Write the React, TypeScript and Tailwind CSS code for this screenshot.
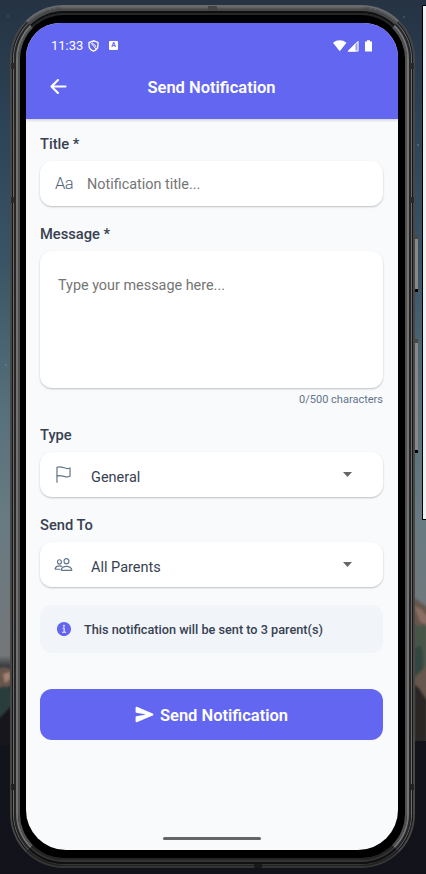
import React from "react";
import {
  IoArrowBack,
  IoFlagOutline,
  IoInformationCircle,
  IoPeopleOutline,
  IoSend,
} from "react-icons/io5";

const card = "rounded-[12px] bg-white shadow-[0_1px_2px_rgba(0,0,0,0.24)]";
const label = "h-[20px] text-[14.7px] font-medium leading-[20px] text-[#374151]";

function Wallpaper() {
  return (
    <svg className="absolute inset-0" width="426" height="874" viewBox="0 0 426 874">
      <defs>
        <linearGradient id="sky" x1="0" y1="0" x2="0" y2="1">
          <stop offset="0" stopColor="#253343" />
          <stop offset="0.14" stopColor="#2d4356" />
          <stop offset="0.3" stopColor="#3a5465" />
          <stop offset="0.47" stopColor="#57707b" />
          <stop offset="0.6" stopColor="#697b82" />
          <stop offset="0.75" stopColor="#74777a" />
          <stop offset="0.77" stopColor="#14151c" />
          <stop offset="1" stopColor="#11121a" />
        </linearGradient>
        <filter id="soft" x="-20%" y="-5%" width="140%" height="110%">
          <feGaussianBlur stdDeviation="1" />
        </filter>
      </defs>
      <rect width="426" height="874" fill="url(#sky)" />
      <g filter="url(#soft)">
        <path d="M398 590 L416 599 L430 609 V745 H398Z" fill="#66564e" />
        <path d="M414 606 l7 3 7 8 v10 l-8 -6z" fill="#8b6e63" />
        <path d="M414 624 l6 3 6 -4 v42 l-6 8 -6 -7z" fill="#46544a" />
        <path d="M414 650 l6 -5 3 8 v16 l-9 9z" fill="#33473f" />
        <path d="M414 684 l5 4 8 12 v50 h-13z" fill="#2b2628" />
        <path d="M-3 668 l8 -1 8 2 v15 l-8 6 -8 4z" fill="#66564e" />
        <path d="M3 674 l7 -2 v7 l-5 4z" fill="#a3816f" />
        <path d="M-3 688 l8 -2 8 4 v24 l-8 10 -8 8z" fill="#2b3e3c" />
        <path d="M-3 720 l14 -14 v40 h-14z" fill="#13141b" />
      </g>
      <path d="M414 741 h12 v40 h-12z" fill="#13141b" />
      <circle cx="8" cy="16" r=".7" fill="#596b79" />
      <circle cx="404" cy="17" r=".7" fill="#4f8288" />
      <circle cx="418" cy="145" r=".7" fill="#8496a1" />
      <circle cx="6" cy="365" r=".7" fill="#8496a1" />
    </svg>
  );
}

function StatusBar() {
  return (
    <div className="flex h-[44px] items-center pl-[25px] pr-[25px] pt-px text-white">
      <span className="w-[37px] text-[13px] leading-[16px]">11:33</span>
      <svg width="11" height="12" viewBox="0 0 11 12" fill="none" stroke="currentColor" strokeWidth="1.3">
        <path d="M5.5 .8 1 2.4v3.2c0 2.6 1.8 4.6 4.5 5.6C8.2 10.2 10 8.2 10 5.6V2.4Z" />
        <path d="M2.5 2.5 8.5 9.5M4.5 2.5c-.5 2 3.500 2 3.500 4.500" strokeWidth="1" />
      </svg>
      <span className="ml-[10px] flex h-[9px] w-[9px] items-center justify-center rounded-[1px] bg-white text-[7px] font-bold leading-none text-[#6366f1]">
        A
      </span>
      <svg className="ml-auto" width="40" height="12" viewBox="0 0 40 12" fill="currentColor">
        <path d="M0 2.800C4 -.5 9.500 -.5 13.500 2.800L6.750 11.200Z" />
        <path d="M14.500 11.500 25.500 .5v11Z" fillOpacity=".35" />
        <path d="M14.500 11.500 22.500 3.500v8Z" />
        <path d="M15.500 11 25 1.500V11Z" fill="none" stroke="currentColor" strokeWidth="1" />
        <path d="M32 1.500h2V.3h3v1.200h2v10h-7Z" />
      </svg>
    </div>
  );
}

function Header() {
  return (
    <header className="relative z-10 h-[96px] shrink-0 bg-[#6366f1] text-white shadow-[0_1px_3px_rgba(0,0,0,0.2)]">
      <StatusBar />
      <div className="grid h-[40px] grid-cols-[44px_1fr_45px] items-center">
        <IoArrowBack className="-mt-[2px] ml-[21px] h-[23px] w-[23px]" />
        <h1 className="pt-px text-center text-[16.5px] font-semibold leading-[24px]">Send Notification</h1>
      </div>
    </header>
  );
}

function Select({ icon, value }: { icon: React.ReactNode; value: string }) {
  return (
    <div className={`${card} mt-[7px] flex h-[45px] items-center pl-[14px] pr-[31px]`}>
      <span className="flex w-[37px] items-center text-[#64748b]">{icon}</span>
      <span className="mt-[7px] text-[14.5px] leading-[20px] text-[#374151]">{value}</span>
      <svg className="ml-auto" width="9" height="5" viewBox="0 0 9 5">
        <path d="M0 0h9L4.500 5Z" fill="#666" />
      </svg>
    </div>
  );
}

function Phone() {
  return (
    <div className="absolute left-[10px] top-[5px] h-[863px] w-[405px] rounded-[54px] border-2 border-x-[#484746] border-b-[#353535] border-t-[#6a6a6a]">
      <div className="h-full w-full rounded-[52px] border border-x-[#171717] border-b-[#222] border-t-[#626262]">
        <div className="h-full w-full rounded-[51px] border border-x-[#6a6a6a] border-b-[#363636] border-t-[#555]">
          <div className="h-full w-full rounded-[50px] border-2 border-x-[#262626] border-b-[#111] border-t-[#484848]">
            <div className="h-full w-full rounded-[48px] border-2 border-x-[#737373] border-b-[#343434] border-t-[#101010]">
              <div className="h-full w-full rounded-[46px] border-2 border-x-[#505050] border-b-[#252525] border-t-[#252525] bg-black" />
            </div>
          </div>
        </div>
      </div>
    </div>
  );
}

export default function App() {
  return (
    <main className="relative h-[874px] w-[426px] overflow-hidden bg-[#14151c] font-[Roboto,sans-serif]">
      <Wallpaper />
      <div className="absolute left-[422px] top-[5px] h-[515px] w-[6px] border border-black bg-[#f0f0f0]" />
      <div className="absolute left-[415px] top-[235px] h-[57px] w-[3px] border-b-[3px] border-t-[4px] border-b-black border-t-[#484848] bg-[#888]" />
      <div className="absolute left-[415px] top-[339px] h-[114px] w-[3px] border-b-[3px] border-t-[4px] border-b-black border-t-[#484848] bg-[#888]" />
      <Phone />
      <div className="absolute left-[11px] top-[63px] h-[6px] w-[4px] bg-[#292929]" />
      <div className="absolute left-[410px] top-[63px] h-[6px] w-[4px] bg-[#292929]" />
      <div className="absolute left-[11px] top-[197px] h-[6px] w-[4px] bg-[#292929]" />
      <div className="absolute left-[410px] top-[197px] h-[6px] w-[4px] bg-[#292929]" />
      <div className="absolute left-[11px] top-[784px] h-[6px] w-[4px] bg-[#222]" />
      <div className="absolute left-[410px] top-[784px] h-[6px] w-[4px] bg-[#222]" />

      <div className="absolute left-[26px] top-[23px] flex h-[827px] w-[372px] flex-col overflow-hidden rounded-[34px_34px_40px_40px] bg-[#f8fafc]">
        <Header />
        <section className="flex flex-1 flex-col pl-[14px] pr-[15px] pt-[15px]">
          <div className={label}>Title *</div>
          <div className={`${card} mt-[7px] flex h-[45px] items-center pl-[15px]`}>
            <span className="w-[19px] pt-px text-[16.5px] font-light leading-[20px] tracking-[-0.5px] text-[#52617a]">Aa</span>
            <span className="ml-[13px] pt-[2px] text-[14.4px] leading-[20px] text-[#757575]">Notification title...</span>
          </div>

          <div className={`${label} mt-[18px]`}>Message *</div>
          <div className={`${card} mt-[7px] h-[137px] pl-[18px] pt-[25px] text-[14.4px] leading-[20px] text-[#757575]`}>
            Type your message here...
          </div>
          <div className="mt-[4px] h-[16px] text-right text-[11px] leading-[16px] text-[#64748b]">0/500 characters</div>

          <div className={`${label} mt-[17px]`}>Type</div>
          <Select icon={<IoFlagOutline className="h-[19px] w-[19px]" />} value="General" />

          <div className={`${label} mt-[18px]`}>Send To</div>
          <Select icon={<IoPeopleOutline className="h-[19px] w-[19px]" />} value="All Parents" />

          <div className="mt-[18px] flex h-[48px] items-center rounded-[12px] bg-[#f1f5f9] pl-[15px]">
            <IoInformationCircle className="h-[18px] w-[18px] text-[#6366f1]" />
            <span className="ml-[11px] pt-px text-[12.7px] font-medium leading-[18px] text-[#374151]">
              This notification will be sent to 3 parent(s)
            </span>
          </div>

          <button className="mt-[36px] flex h-[51px] items-center justify-center gap-[6px] rounded-[12px] bg-[#6366f1] text-white">
            <IoSend className="h-[19px] w-[19px]" />
            <span className="pt-[2px] text-[16.5px] font-semibold leading-[24px]">Send Notification</span>
          </button>
          <div className="mb-[10px] mt-auto h-[3px] w-[98px] self-center rounded-full bg-[#666]" />
        </section>
      </div>

      <svg className="absolute left-[199px] top-[32px]" width="26" height="26" viewBox="0 0 26 26">
        <circle cx="12.500" cy="13" r="12.500" fill="#050505" />
        <circle cx="12.500" cy="13" r="6" fill="#101213" stroke="#1c1f20" />
        <circle cx="12.500" cy="13.500" r="3.500" fill="#2c2527" />
        <path d="M9 13 12 16" stroke="#8a7565" strokeWidth="1.300" />
        <path d="M12.500 11.500 15.500 13" stroke="#80607c" strokeWidth="1.200" />
      </svg>
      <div className="absolute left-[208px] top-[6px] h-[5px] w-[9px] bg-[#444]" />
      <div className="absolute left-[254px] top-[864px] h-[4px] w-[8px] bg-[#191919]" />
    </main>
  );
}
